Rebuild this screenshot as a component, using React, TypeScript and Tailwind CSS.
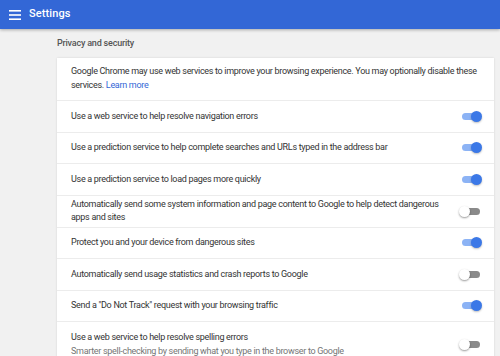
import React from "react";

function Toggle({ on }: { on: boolean }) {
  return (
    <div className="relative w-[24px] h-[11px] shrink-0">
      <div
        className={
          "absolute left-[4px] right-[2px] top-[2px] h-[7px] rounded-full " +
          (on ? "bg-[#8cb3f5]" : "bg-[#8a8a8a]")
        }
      />
      <div
        className={
          "absolute top-0 w-[11px] h-[11px] rounded-full " +
          (on
            ? "right-[0px] bg-[#3b78e7] shadow-[0_1px_2px_rgba(0,0,0,0.25)]"
            : "left-[1px] bg-white shadow-[0_1px_2px_rgba(0,0,0,0.4)]")
        }
      />
    </div>
  );
}

function Row({
  label,
  sub,
  on,
  last,
}: {
  label: string;
  sub?: string;
  on: boolean;
  last?: boolean;
}) {
  return (
    <div
      className={
        "flex items-center justify-between pl-[14px] pr-[12px] min-h-[31.5px] " +
        (last ? "py-[7px]" : "border-b border-[#ececec]")
      }
    >
      <div className="pr-[14px] py-[2px]">
        <div className="text-[9px] leading-[13.5px] tracking-[-0.3px] text-[#333]">
          {label}
        </div>
        {sub && (
          <div className="text-[9px] leading-[13px] tracking-[-0.3px] text-[#757575]">
            {sub}
          </div>
        )}
      </div>
      <Toggle on={on} />
    </div>
  );
}

export default function App() {
  return (
    <div
      className="w-[500px] h-[356px] overflow-hidden bg-[#f1f1f1]"
      style={{ fontFamily: "Roboto, 'Liberation Sans', sans-serif" }}
    >
      <div className="relative z-10 h-[29px] bg-[#3367d6] flex items-center shadow-[0_1px_3px_rgba(0,0,0,0.3)]">
        <svg width="12" height="10" viewBox="0 0 12 10" className="ml-[9px]">
          <rect x="0" y="0" width="12" height="1.6" fill="white" />
          <rect x="0" y="4.2" width="12" height="1.6" fill="white" />
          <rect x="0" y="8.4" width="12" height="1.6" fill="white" />
        </svg>
        <span className="ml-[8px] text-white text-[11px] font-medium tracking-[0.1px]">
          Settings
        </span>
      </div>
      <div className="pl-[57px] pr-[6px]">
        <div className="h-[29px] flex items-center pt-[1px] text-[9px] font-medium tracking-[-0.2px] text-[#555]">
          Privacy and security
        </div>
        <div className="bg-white shadow-[0_0_2px_rgba(0,0,0,0.12)]">
          <div className="pl-[14px] pr-[10px] pt-[6px] pb-[8px] border-b border-[#ececec] text-[9px] leading-[14px] tracking-[-0.3px] text-[#333]">
            <p>
              Google Chrome may use web services to improve your browsing
              experience. You may optionally disable these
            </p>
            <p>
              services. <span className="text-[#3367d6]">Learn more</span>
            </p>
          </div>
          <Row label="Use a web service to help resolve navigation errors" on />
          <Row
            label="Use a prediction service to help complete searches and URLs typed in the address bar"
            on
          />
          <Row label="Use a prediction service to load pages more quickly" on />
          <Row
            label="Automatically send some system information and page content to Google to help detect dangerous apps and sites"
            on={false}
          />
          <Row label="Protect you and your device from dangerous sites" on />
          <Row
            label="Automatically send usage statistics and crash reports to Google"
            on={false}
          />
          <Row
            label={'Send a "Do Not Track" request with your browsing traffic'}
            on
          />
          <Row
            label="Use a web service to help resolve spelling errors"
            sub="Smarter spell-checking by sending what you type in the browser to Google"
            on={false}
            last
          />
        </div>
      </div>
    </div>
  );
}
